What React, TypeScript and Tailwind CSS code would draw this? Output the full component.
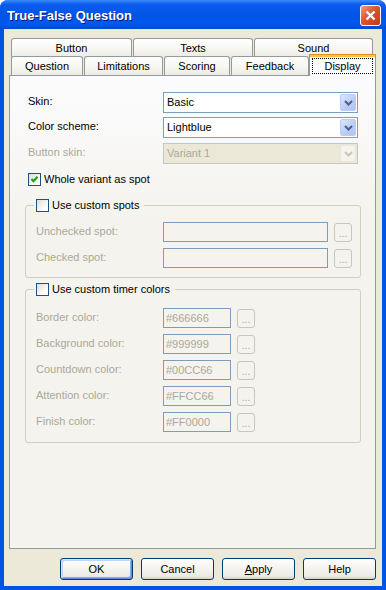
import clsx from 'clsx'

const GREY = 'text-[#ACA899]'

function Chevron({ disabled }: { disabled?: boolean }) {
  return (
    <svg width="9" height="6" viewBox="0 0 9 6">
      <path d="M1 1l3.5 3.5L8 1" fill="none" stroke={disabled ? '#C9C7BA' : '#4D6185'} strokeWidth="2" />
    </svg>
  )
}

function Combo({ value, disabled }: { value: string; disabled?: boolean }) {
  return (
    <div
      className={clsx(
        'w-[195px] h-[21px] border flex items-center p-px',
        disabled ? 'border-[#C9C7BA] bg-[#EBE8D7]' : 'border-[#7F9DB9] bg-white'
      )}
    >
      <span className={clsx('flex-1 pl-[2px] leading-[13px]', disabled && GREY)}>{value}</span>
      <div
        className={clsx(
          'w-[16px] h-[17px] rounded-[2px] border flex items-center justify-center',
          disabled
            ? 'bg-[#F4F3EE] border-[#E8E6DC]'
            : 'bg-[linear-gradient(135deg,#DDE7FD,#B8CCF8_60%,#AFC5F6)] border-[#BACCF6]'
        )}
      >
        <Chevron disabled={disabled} />
      </div>
    </div>
  )
}

function Checkbox({ checked }: { checked?: boolean }) {
  return (
    <span className="w-[13px] h-[13px] border border-[#1C5180] bg-[linear-gradient(135deg,#DCDCD7,#FFFFFF_75%)] flex items-center justify-center shrink-0">
      {checked && (
        <svg width="11" height="11" viewBox="0 0 11 11">
          <path d="M2.5 5l2 2.2L8.5 2.8" fill="none" stroke="#21A121" strokeWidth="2.2" />
        </svg>
      )}
    </span>
  )
}

function Edit({ value, w }: { value?: string; w: string }) {
  return (
    <div className={clsx('h-[20px] border border-[#7F9DB9] pl-[2px] flex items-center leading-[13px]', w, GREY)}>
      {value}
    </div>
  )
}

function Dots() {
  return (
    <div className={clsx('w-[18px] h-[19px] ml-[6px] border border-[#C9C7BA] rounded-[3px] flex items-center justify-center text-[10px] pt-[3px]', GREY)}>
      ...
    </div>
  )
}

function Tab({ label, w }: { label: string; w: string }) {
  return (
    <div
      className={clsx(
        'h-[19px] border border-b-0 border-[#919B9C] rounded-t-[3px] bg-[linear-gradient(#FFFFFF,#F6F5F1_60%,#ECEBE6)] flex items-center justify-center leading-[13px]',
        w
      )}
    >
      {label}
    </div>
  )
}

function Group({ label, children }: { label: string; children: React.ReactNode }) {
  return (
    <fieldset className="-ml-[3px] w-[336px] border border-[#D0D0BF] rounded-[3px] pl-[8px] pr-[6px]">
      <legend className="pl-[2px] pr-[5px]">
        <span className="flex items-center gap-[3px] leading-[13px]">
          <Checkbox />
          {label}
        </span>
      </legend>
      {children}
    </fieldset>
  )
}

function Row({ label, children, className }: { label: string; children: React.ReactNode; className?: string }) {
  return (
    <div className={clsx('flex items-center pl-[2px]', className)}>
      <span className={clsx('w-[127px] leading-[13px] pb-px', GREY)}>{label}</span>
      {children}
    </div>
  )
}

function XPButton({ children, primary }: { children: React.ReactNode; primary?: boolean }) {
  return (
    <div
      className={clsx(
        'w-[73px] h-[22px] rounded-[3px] border border-[#003C74] bg-[linear-gradient(#FFFFFF,#F5F4F0_45%,#ECEBE6_85%,#D6D0C5)] flex items-center justify-center leading-[13px]',
        primary &&
          'shadow-[inset_1px_1px_0_#CEE7FF,inset_-1px_-1px_0_#6982EE,inset_2px_2px_0_#BCD4F6,inset_-2px_-2px_0_#89ADE4]'
      )}
    >
      {children}
    </div>
  )
}

export default function App() {
  const timerColors = [
    ['Border color:', '#666666'],
    ['Background color:', '#999999'],
    ['Countdown color:', '#00CC66'],
    ['Attention color:', '#FFCC66'],
    ['Finish color:', '#FF0000'],
  ]

  return (
    <div className="w-[386px] h-[590px] bg-white font-['Liberation_Sans',Arial,sans-serif] text-[11px] text-black">
      <div className="flex flex-col h-full rounded-t-[8px] bg-[#0054E3] overflow-hidden">
        {/* title bar */}
        <div className="h-[29px] shrink-0 flex items-center pl-[7px] pr-[5px] pt-[2px] bg-[linear-gradient(#3D8EF8,#0B5DF0_14%,#0055E6_50%,#0058EE_85%,#0048D0)]">
          <span className="flex-1 text-white font-bold text-[13px] [text-shadow:1px_1px_0_#0A1883]">
            True-False Question
          </span>
          <div className="w-[21px] h-[21px] rounded-[3px] border border-white bg-[linear-gradient(135deg,#EE9E84,#DA5530_45%,#C43A16)] flex items-center justify-center">
            <svg width="11" height="11" viewBox="0 0 11 11">
              <path d="M1.5 1.5l8 8M9.5 1.5l-8 8" stroke="white" strokeWidth="2.4" />
            </svg>
          </div>
        </div>

        {/* client */}
        <div className="flex-1 mx-[4px] mb-[4px] bg-[#ECE9D8] flex flex-col pt-[9px]">
          <div className="ml-[7px] flex gap-px">
            <Tab label="Button" w="w-[121px]" />
            <Tab label="Texts" w="w-[120px]" />
            <Tab label="Sound" w="w-[119px]" />
          </div>
          <div className="ml-[7px] -mt-[3px] h-[22px] flex items-end gap-px relative z-10">
            <div className="mb-px flex gap-px">
              <Tab label="Question" w="w-[72px]" />
              <Tab label="Limitations" w="w-[79px]" />
              <Tab label="Scoring" w="w-[66px]" />
              <Tab label="Feedback" w="w-[78px]" />
            </div>
            <div className="w-[67px] h-[22px] border-x border-[#919B9C] bg-[#FCFCFE] flex flex-col -ml-px">
              <div className="h-[1px] bg-[#E68B2C]" />
              <div className="h-[2px] bg-[#FFC83C]" />
              <div className="mx-[2px] mt-px h-[16px] border border-dotted border-black flex items-center justify-center leading-[13px]">
                Display
              </div>
            </div>
          </div>

          {/* panel */}
          <div className="ml-[5px] -mt-px w-[367px] h-[474px] border border-[#919B9C] bg-[linear-gradient(#FCFCFE,#F4F3EE_30%,#F4F3EE)] pl-[18px] pt-[16px]">
            <div className="flex items-center">
              <span className="w-[135px] leading-[13px] pb-[3px]">Skin:</span>
              <Combo value="Basic" />
            </div>
            <div className="flex items-center mt-[4px]">
              <span className="w-[135px] leading-[13px] pb-[3px]">Color scheme:</span>
              <Combo value="Lightblue" />
            </div>
            <div className="flex items-center mt-[5px]">
              <span className={clsx('w-[135px] leading-[13px] pb-[3px]', GREY)}>Button skin:</span>
              <Combo value="Variant 1" disabled />
            </div>
            <div className="flex items-center gap-[3px] mt-[9px] leading-[13px]">
              <Checkbox checked />
              Whole variant as spot
            </div>

            <div className="mt-[13px]">
              <Group label="Use custom spots">
                <div className="pt-[10px] pb-[9px] flex flex-col gap-[6px]">
                  <Row label="Unchecked spot:">
                    <Edit w="w-[165px]" />
                    <Dots />
                  </Row>
                  <Row label="Checked spot:">
                    <Edit w="w-[165px]" />
                    <Dots />
                  </Row>
                </div>
              </Group>
            </div>

            <div className="mt-[5px]">
              <Group label="Use custom timer colors">
                <div className="pt-[12px] pb-[10px] flex flex-col gap-[6px]">
                  {timerColors.map(([label, value]) => (
                    <Row key={label} label={label}>
                      <Edit w="w-[68px]" value={value} />
                      <Dots />
                    </Row>
                  ))}
                </div>
              </Group>
            </div>
          </div>

          {/* buttons */}
          <div className="mt-[9px] flex justify-end gap-[8px] pr-[6px]">
            <XPButton primary>OK</XPButton>
            <XPButton>Cancel</XPButton>
            <XPButton>
              <span>
                <span className="underline">A</span>pply
              </span>
            </XPButton>
            <XPButton>Help</XPButton>
          </div>
        </div>
      </div>
    </div>
  )
}
